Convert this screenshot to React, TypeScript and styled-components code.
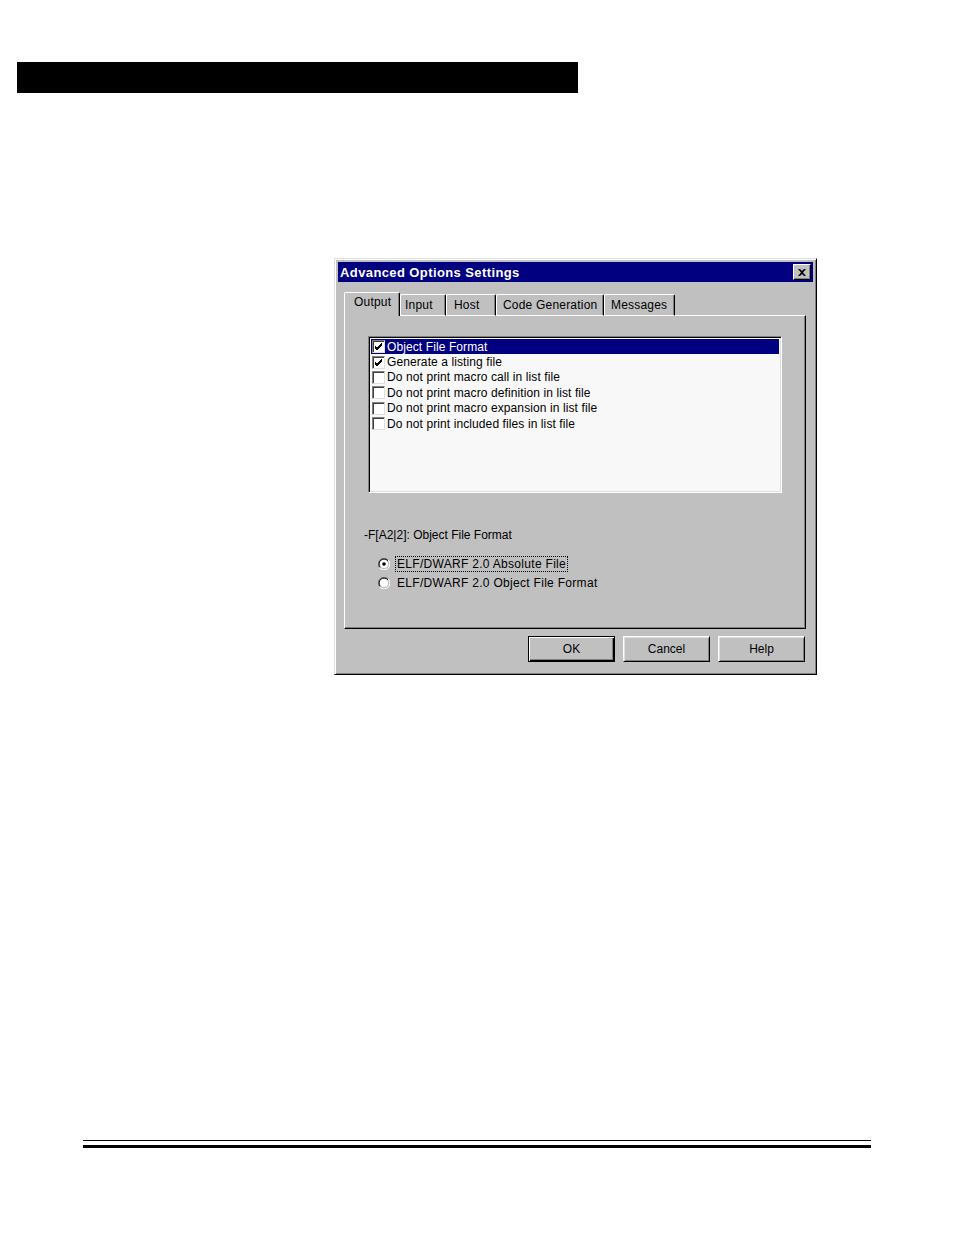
import React from 'react';
import styled, { createGlobalStyle, css } from 'styled-components';

const GlobalStyle = createGlobalStyle`
    html, body {
        margin: 0;
        padding: 0;
        background: #ffffff;
    }
    body {
        font-family: "Liberation Sans", Arial, sans-serif;
    }
`;

const Page = styled.div`
    width: 954px;
    height: 1235px;
    display: flex;
    flex-direction: column;
    overflow: hidden;
`;

const HeaderBar = styled.div`
    margin: 62px 0 0 17px;
    width: 561px;
    height: 31px;
    background: #000;
`;

const Dialog = styled.div`
    margin: 165px 0 0 334px;
    width: 483px;
    height: 417px;
    box-sizing: border-box;
    background: #c0c0c0;
    border: 1px solid;
    border-color: #dfdfdf #000 #000 #dfdfdf;
    box-shadow: inset 1px 1px #fff, inset -1px -1px #808080;
    padding: 3px;
    display: flex;
    flex-direction: column;
    font-size: 12px;
    color: #000;
`;

const TitleBar = styled.div`
    height: 20px;
    background: #000080;
    display: flex;
    align-items: center;
    justify-content: space-between;
    padding: 0 2px 0 2px;
`;

const TitleText = styled.span`
    color: #fff;
    font-weight: bold;
    font-size: 13px;
    letter-spacing: 0.4px;
`;

const CloseButton = styled.div`
    width: 18px;
    height: 16px;
    box-sizing: border-box;
    background: #c0c0c0;
    border: 1px solid;
    border-color: #fff #000 #000 #fff;
    box-shadow: inset -1px -1px #808080;
    display: flex;
    align-items: center;
    justify-content: center;
`;

const Body = styled.div`
    flex: 1;
    display: flex;
    flex-direction: column;
    padding: 10px 7px 0 6px;
`;

const TabStrip = styled.div`
    display: flex;
    align-items: flex-end;
    height: 24px;
    margin-bottom: -1px;
    position: relative;
    z-index: 1;
`;

const Tab = styled.div<{ $width: number; $inset: number; $active?: boolean }>`
    width: ${({ $width }) => $width}px;
    box-sizing: border-box;
    height: ${({ $active }) => ($active ? 24 : 22)}px;
    background: #c0c0c0;
    border-top: 1px solid #fff;
    border-left: 1px solid #fff;
    border-right: 1px solid #000;
    border-radius: 2px 2px 0 0;
    box-shadow: inset -1px 0 #808080;
    display: flex;
    align-items: ${({ $active }) => ($active ? 'flex-start' : 'center')};
    padding-top: ${({ $active }) => ($active ? 2 : 0)}px;
    padding-left: ${({ $inset }) => $inset}px;
    letter-spacing: 0.2px;
    ${({ $active }) =>
        !$active &&
        css`
            border-bottom: 1px solid #fff;
        `}
`;

const Panel = styled.div`
    height: 314px;
    box-sizing: border-box;
    border: 1px solid;
    border-color: #fff #000 #000 #fff;
    box-shadow: inset -1px -1px #808080;
    padding: 20px 23px 0 23px;
    display: flex;
    flex-direction: column;
`;

const ListBox = styled.div`
    width: 414px;
    height: 157px;
    box-sizing: border-box;
    background: #f8f8f8;
    border: 1px solid;
    border-color: #808080 #fff #fff #808080;
    box-shadow: inset 1px 1px #000, inset -1px -1px #dfdfdf;
    padding: 2px 2px 0 2px;
    display: flex;
    flex-direction: column;
`;

const ListRow = styled.div<{ $selected?: boolean }>`
    height: 15.4px;
    display: flex;
    align-items: center;
    gap: 2px;
    padding-left: 1px;
    white-space: nowrap;
    letter-spacing: 0.1px;
    background: ${({ $selected }) => ($selected ? '#000080' : 'transparent')};
    color: ${({ $selected }) => ($selected ? '#fff' : '#000')};
`;

const CheckBox = styled.div`
    width: 13px;
    height: 13px;
    box-sizing: border-box;
    background: #fff;
    border: 1px solid;
    border-color: #808080 #dfdfdf #dfdfdf #808080;
    box-shadow: inset 1px 1px #404040;
    display: flex;
    align-items: center;
    justify-content: center;
    flex-shrink: 0;
`;

const OptionLabel = styled.div`
    margin: 35px 0 0 -4px;
    height: 14px;
    line-height: 14px;
`;

const RadioGroup = styled.div`
    margin: 15px 0 0 10px;
    display: flex;
    flex-direction: column;
    gap: 5px;
`;

const RadioRow = styled.div`
    display: flex;
    align-items: center;
    gap: 6px;
    height: 14px;
`;

const RadioText = styled.span<{ $focused?: boolean }>`
    padding: 0 1px;
    line-height: 14px;
    letter-spacing: 0.3px;
    outline: ${({ $focused }) => ($focused ? '1px dotted #000' : 'none')};
`;

const ButtonRow = styled.div`
    display: flex;
    justify-content: flex-end;
    gap: 8px;
    margin-top: 7px;
    padding-right: 1px;
`;

const DialogButton = styled.div<{ $default?: boolean }>`
    width: 87px;
    height: 26px;
    box-sizing: border-box;
    background: #c0c0c0;
    display: flex;
    align-items: center;
    justify-content: center;
    border: 1px solid;
    ${({ $default }) =>
        $default
            ? css`
                  border-color: #000;
                  box-shadow: inset 1px 1px #fff, inset -1px -1px #000, inset -2px -2px #808080;
              `
            : css`
                  border-color: #fff #000 #000 #fff;
                  box-shadow: inset 1px 1px #dfdfdf, inset -1px -1px #808080;
              `}
`;

const Footer = styled.div`
    margin: 465px 0 0 83px;
    width: 788px;
    display: flex;
    flex-direction: column;
    gap: 4px;
`;

const Rule = styled.div<{ $thick?: boolean }>`
    height: ${({ $thick }) => ($thick ? 3 : 1)}px;
    background: #000;
`;

const CheckMark = () => (
    <svg width="9" height="9" viewBox="0 0 9 9">
        <path d="M1 4 L3 6 L8 1 M1 5 L3 7 L8 2 M1 6 L3 8 L8 3" stroke="#000" strokeWidth="1" fill="none" />
    </svg>
);

const CloseGlyph = () => (
    <svg width="8" height="7" viewBox="0 0 8 7">
        <path d="M0 0 L2 0 L4 2 L6 0 L8 0 L5 3.5 L8 7 L6 7 L4 5 L2 7 L0 7 L3 3.5 Z" fill="#000" />
    </svg>
);

const Radio = ({ checked }: { checked?: boolean }) => (
    <svg width="12" height="12" viewBox="0 0 12 12">
        <path d="M10.5 2.2 A5.5 5.5 0 0 0 1.5 9.8" stroke="#808080" fill="none" />
        <path d="M9.8 2.8 A4.5 4.5 0 0 0 2.2 9.2" stroke="#000" fill="none" />
        <path d="M1.5 9.8 A5.5 5.5 0 0 0 10.5 2.2" stroke="#fff" fill="none" />
        <circle cx="6" cy="6" r="4" fill="#fff" />
        {checked && <circle cx="6" cy="6" r="1.8" fill="#000" />}
    </svg>
);

const tabs = [
    { label: 'Output', width: 56, inset: 9, active: true },
    { label: 'Input', width: 46, inset: 4 },
    { label: 'Host', width: 50, inset: 7 },
    { label: 'Code Generation', width: 108, inset: 6 },
    { label: 'Messages', width: 71, inset: 6 },
];

const options = [
    { label: 'Object File Format', checked: true, selected: true },
    { label: 'Generate a listing file', checked: true },
    { label: 'Do not print macro call in list file' },
    { label: 'Do not print macro definition in list file' },
    { label: 'Do not print macro expansion in list file' },
    { label: 'Do not print included files in list file' },
];

const App = () => {
    return (
        <Page>
            <GlobalStyle />
            <HeaderBar />
            <Dialog>
                <TitleBar>
                    <TitleText>Advanced Options Settings</TitleText>
                    <CloseButton>
                        <CloseGlyph />
                    </CloseButton>
                </TitleBar>
                <Body>
                    <TabStrip>
                        {tabs.map(({ label, width, inset, active }) => (
                            <Tab key={label} $width={width} $inset={inset} $active={active}>
                                {label}
                            </Tab>
                        ))}
                    </TabStrip>
                    <Panel>
                        <ListBox>
                            {options.map(({ label, checked, selected }) => (
                                <ListRow key={label} $selected={selected}>
                                    <CheckBox>{checked && <CheckMark />}</CheckBox>
                                    {label}
                                </ListRow>
                            ))}
                        </ListBox>
                        <OptionLabel>-F[A2|2]: Object File Format</OptionLabel>
                        <RadioGroup>
                            <RadioRow>
                                <Radio checked />
                                <RadioText $focused>ELF/DWARF 2.0 Absolute File</RadioText>
                            </RadioRow>
                            <RadioRow>
                                <Radio />
                                <RadioText>ELF/DWARF 2.0 Object File Format</RadioText>
                            </RadioRow>
                        </RadioGroup>
                    </Panel>
                    <ButtonRow>
                        <DialogButton $default>OK</DialogButton>
                        <DialogButton>Cancel</DialogButton>
                        <DialogButton>Help</DialogButton>
                    </ButtonRow>
                </Body>
            </Dialog>
            <Footer>
                <Rule />
                <Rule $thick />
            </Footer>
        </Page>
    );
};

export default App;
